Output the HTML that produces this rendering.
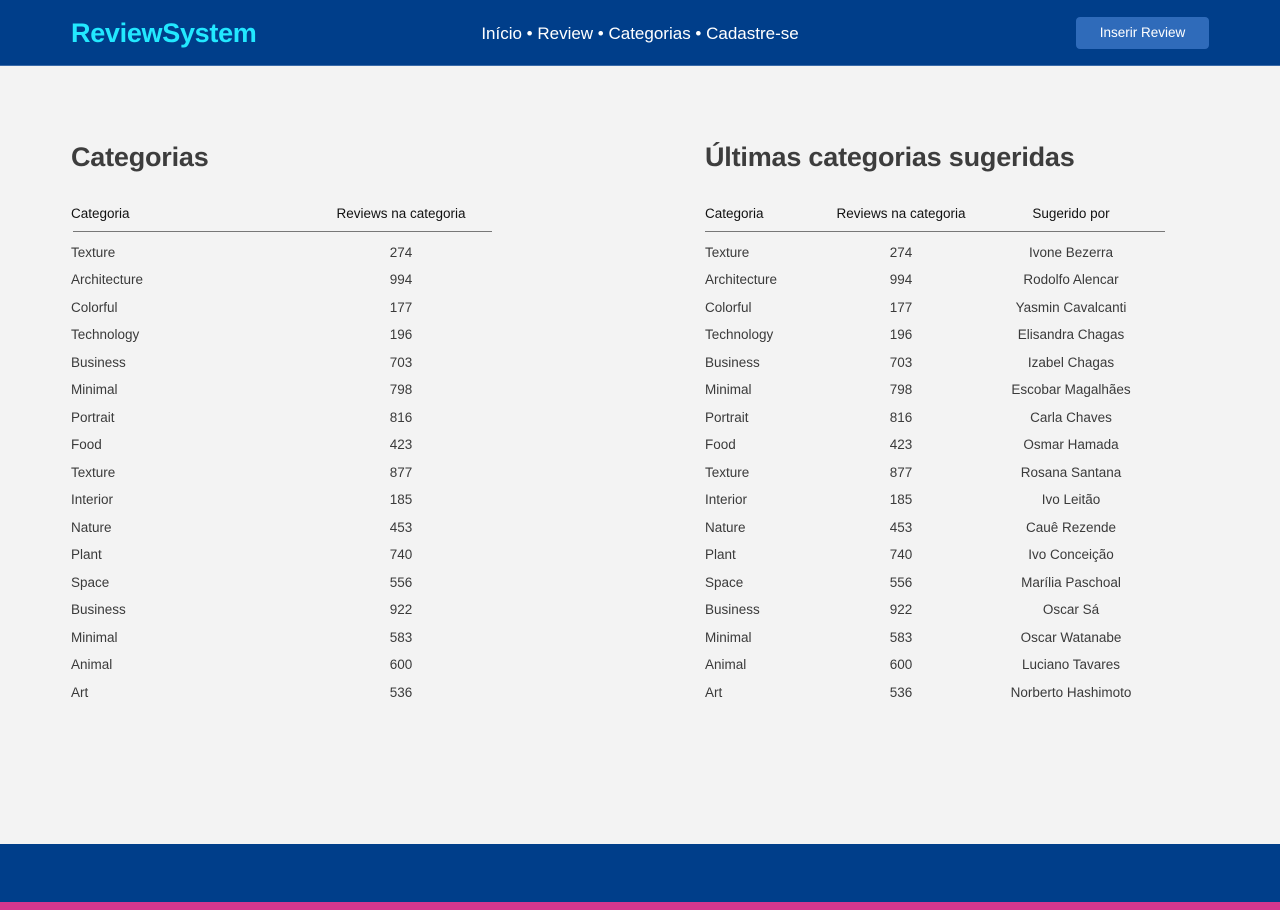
<!DOCTYPE html>
<html><head><meta charset="utf-8"><style>
*{margin:0;padding:0;box-sizing:border-box}
body{width:1280px;height:910px;background:#f3f3f3;font-family:"Liberation Sans",sans-serif;position:relative;overflow:hidden;color:#333}
.hdr{position:absolute;left:0;top:0;width:1280px;height:66px;background:#003e8a;border-bottom:1px solid #3a6aa8}
.logo{position:absolute;left:71px;top:18px;font-size:27px;font-weight:bold;color:#22e8ff;letter-spacing:-0.3px}
.nav{position:absolute;left:0;width:1280px;top:24px;text-align:center;color:#fff;font-size:17px}
.btn{position:absolute;left:1076px;top:17px;width:133px;height:32px;background:#2f6bba;border-radius:4px;color:#fff;font-size:13.5px;text-align:center;line-height:32px}
h2{position:absolute;font-size:27px;font-weight:bold;color:#3d3d3d;top:142px;letter-spacing:-0.2px}
.t{position:absolute;top:206px;font-size:13.5px}
.th{position:absolute;top:0;color:#111}
.line{position:absolute;top:25px;height:1px;background:#777}
.row{position:absolute;color:#3a3a3a;white-space:nowrap}
.c{text-align:center}
.ftr{position:absolute;left:0;top:844px;width:1280px;height:58px;background:#003e8a}
.pink{position:absolute;left:0;top:902px;width:1280px;height:8px;background:#d6378e}
</style></head><body>
<div class="hdr"><div class="logo">ReviewSystem</div><div class="nav">Início • Review • Categorias • Cadastre-se</div><div class="btn">Inserir Review</div></div>
<h2 style="left:71px">Categorias</h2>
<h2 style="left:705px">Últimas categorias sugeridas</h2>
<div class="t" id="a" style="left:71px"></div>
<div class="t" id="b" style="left:705px"></div>
<div class="ftr"></div><div class="pink"></div>
<script>
var cats=["Texture","Architecture","Colorful","Technology","Business","Minimal","Portrait","Food","Texture","Interior","Nature","Plant","Space","Business","Minimal","Animal","Art"];
var nums=[274,994,177,196,703,798,816,423,877,185,453,740,556,922,583,600,536];
var names=["Ivone Bezerra","Rodolfo Alencar","Yasmin Cavalcanti","Elisandra Chagas","Izabel Chagas","Escobar Magalhães","Carla Chaves","Osmar Hamada","Rosana Santana","Ivo Leitão","Cauê Rezende","Ivo Conceição","Marília Paschoal","Oscar Sá","Oscar Watanabe","Luciano Tavares","Norberto Hashimoto"];
function cell(x,y,w,txt,cls){return '<div class="'+cls+'" style="left:'+x+'px;top:'+y+'px;width:'+w+'px">'+txt+'</div>';}
var a=cell(0,0,200,"Categoria","th")+cell(230,0,200,"Reviews na categoria","th c")+'<div class="line" style="left:2px;width:419px"></div>';
var b=cell(0,0,200,"Categoria","th")+cell(96,0,200,"Reviews na categoria","th c")+cell(266,0,200,"Sugerido por","th c")+'<div class="line" style="left:0;width:460px"></div>';
for(var i=0;i<17;i++){var y=38.5+i*27.5;
a+=cell(0,y,200,cats[i],"row")+cell(230,y,200,nums[i],"row c");
b+=cell(0,y,200,cats[i],"row")+cell(96,y,200,nums[i],"row c")+cell(266,y,200,names[i],"row c");}
document.getElementById("a").innerHTML=a;document.getElementById("b").innerHTML=b;
</script>
</body></html>
